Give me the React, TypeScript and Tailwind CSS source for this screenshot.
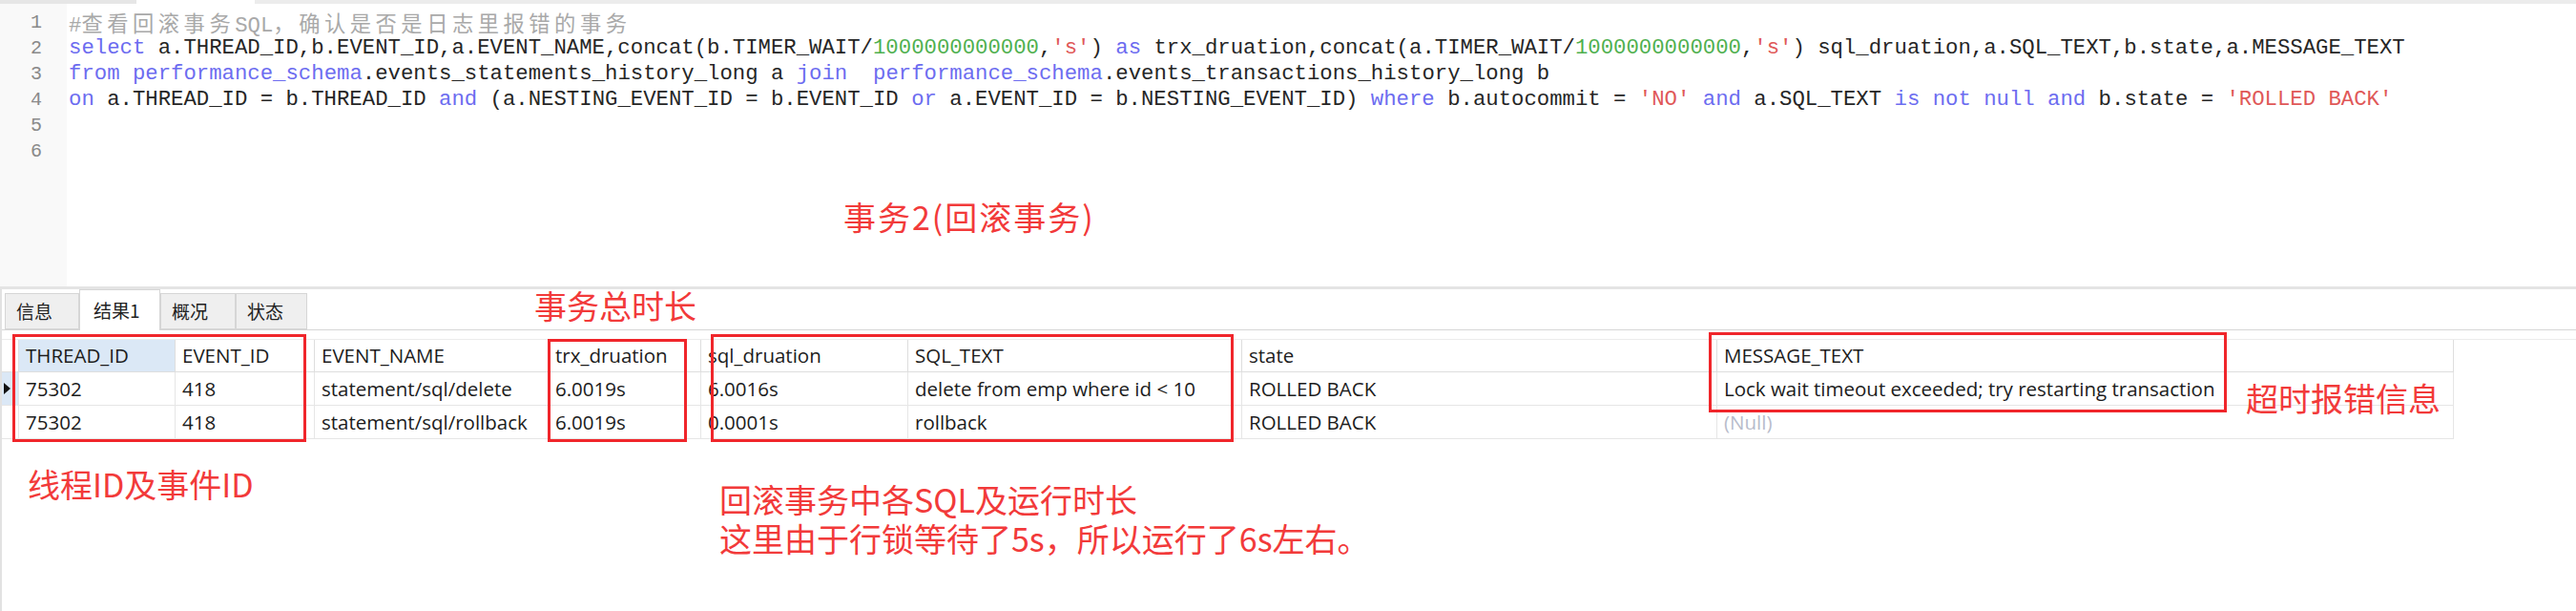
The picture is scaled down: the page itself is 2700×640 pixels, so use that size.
type Seg = [string, "kw" | "id" | "num" | "str" | "cm" | "cjk"];

const segColor: Record<Seg[1], string> = {
  kw: "text-[#6c6cf0]",
  id: "text-[#262626]",
  num: "text-[#4fb04f]",
  str: "text-[#e05858]",
  cm: "text-[#a9a9a9]",
  cjk: "text-[#a9a9a9]",
};

const code: Seg[][] = [
  [
    ["#", "cm"],
    ["查看回滚事务", "cjk"],
    ["SQL", "cm"],
    ["，确认是否是日志里报错的事务", "cjk"],
  ],
  [
    ["select", "kw"],
    [" a.THREAD_ID,b.EVENT_ID,a.EVENT_NAME,concat(b.TIMER_WAIT/", "id"],
    ["1000000000000", "num"],
    [",", "id"],
    ["'s'", "str"],
    [") ", "id"],
    ["as", "kw"],
    [" trx_druation,concat(a.TIMER_WAIT/", "id"],
    ["1000000000000", "num"],
    [",", "id"],
    ["'s'", "str"],
    [") sql_druation,a.SQL_TEXT,b.state,a.MESSAGE_TEXT", "id"],
  ],
  [
    ["from", "kw"],
    [" ", "id"],
    ["performance_schema", "kw"],
    [".events_statements_history_long a ", "id"],
    ["join", "kw"],
    ["  ", "id"],
    ["performance_schema", "kw"],
    [".events_transactions_history_long b", "id"],
  ],
  [
    ["on", "kw"],
    [" a.THREAD_ID = b.THREAD_ID ", "id"],
    ["and", "kw"],
    [" (a.NESTING_EVENT_ID = b.EVENT_ID ", "id"],
    ["or", "kw"],
    [" a.EVENT_ID = b.NESTING_EVENT_ID) ", "id"],
    ["where", "kw"],
    [" b.autocommit = ", "id"],
    ["'NO'", "str"],
    [" ", "id"],
    ["and", "kw"],
    [" a.SQL_TEXT ", "id"],
    ["is not null", "kw"],
    [" ", "id"],
    ["and", "kw"],
    [" b.state = ", "id"],
    ["'ROLLED BACK'", "str"],
  ],
  [],
  [],
];

const cols = [
  { name: "THREAD_ID", w: "w-[164px]" },
  { name: "EVENT_ID", w: "w-[146px]" },
  { name: "EVENT_NAME", w: "w-[245px]" },
  { name: "trx_druation", w: "w-[160px]" },
  { name: "sql_druation", w: "w-[217px]" },
  { name: "SQL_TEXT", w: "w-[350px]" },
  { name: "state", w: "w-[498px]" },
  { name: "MESSAGE_TEXT", w: "w-[772px]" },
];

const rows: (string | null)[][] = [
  ["75302", "418", "statement/sql/delete", "6.0019s", "6.0016s", "delete from emp where id < 10", "ROLLED BACK", "Lock wait timeout exceeded; try restarting transaction"],
  ["75302", "418", "statement/sql/rollback", "6.0019s", "0.0001s", "rollback", "ROLLED BACK", null],
];

const tabs = [
  { label: "信息", w: "w-[78px]" },
  { label: "结果1", w: "w-[85px]", active: true },
  { label: "概况", w: "w-[79px]" },
  { label: "状态", w: "w-[75px]" },
];

const note = "font-['Noto_Sans_CJK_SC',sans-serif] text-[#f23a3a] leading-none whitespace-nowrap absolute";
const box = "absolute border-[3px] border-[#f0262b]";

export default function App() {
  return (
    <div className="relative w-[2700px] h-[640px] overflow-hidden bg-white">
      <div className="flex h-[4px]">
        <div className="w-[143px] bg-[#e6e6e6]" />
        <div className="w-[124px]" />
        <div className="flex-1 bg-[#ececec]" />
      </div>

      {/* editor */}
      <div className="flex h-[296px]">
        <div className="w-[70px] shrink-0 bg-[#f9f9f9] pt-[6px] pr-[26px] text-right font-['Liberation_Mono',monospace] text-[20px] leading-[27px] text-[#8a8a8a]">
          {code.map((_, i) => (
            <div key={i}>{i + 1}</div>
          ))}
        </div>
        <div className="pt-[6px] pl-[2px] font-['Liberation_Mono',monospace] text-[22.3px] leading-[27px] whitespace-pre">
          {code.map((line, i) => (
            <div key={i} className="h-[27px]">
              {line.map(([t, k], j) => (
                <span
                  key={j}
                  className={
                    segColor[k] +
                    (k === "cjk" ? " font-['Noto_Sans_CJK_SC',sans-serif] tracking-[4.5px]" : "")
                  }
                >
                  {t}
                </span>
              ))}
            </div>
          ))}
        </div>
      </div>
      <div className="h-[3px] bg-[#e4e4e4]" />

      {/* result area */}
      <div className="h-[337px] border-l-2 border-[#e2e2e2]">
        <div className="flex h-[43px] items-end border-b border-[#d6d6d6] pl-[3px] font-['Noto_Sans_CJK_SC',sans-serif] text-[19px] text-[#222]">
          {tabs.map((t) =>
            t.active ? (
              <div
                key={t.label}
                className={`${t.w} -mb-px flex h-[43px] items-center border border-b-0 border-[#d6d6d6] bg-white pl-[14px]`}
              >
                {t.label}
              </div>
            ) : (
              <div
                key={t.label}
                className={`${t.w} flex h-[38px] items-center border border-[#d6d6d6] bg-[#efefef] pl-[11px]`}
              >
                {t.label}
              </div>
            )
          )}
        </div>

        <div className="mt-[9px] font-['Open_Sans',sans-serif] text-[20.5px] text-[#1c1c1c]">
          <div className="flex h-[35px] border-t border-[#ececec]">
            <div className="w-[18px] border-r border-b border-[#dedede]" />
            {cols.map((c, i) => (
              <div
                key={c.name}
                className={`${c.w} flex items-center border-r border-b border-[#dedede] px-[7px] ${i === 0 ? "bg-[#dbe8f6]" : ""}`}
              >
                {c.name}
              </div>
            ))}
          </div>
          {rows.map((r, ri) => (
            <div key={ri} className="flex h-[35px]">
              <div
                className={`flex w-[18px] items-center justify-center border-r border-b border-[#e6e6e6] ${ri === 0 ? "bg-[#dbe8f6]" : ""}`}
              >
                {ri === 0 && (
                  <span className="ml-[-6px] block h-0 w-0 border-y-[6px] border-l-[7px] border-y-transparent border-l-[#111]" />
                )}
              </div>
              {r.map((v, ci) => (
                <div
                  key={ci}
                  className={`${cols[ci].w} flex items-center overflow-hidden whitespace-nowrap border-r border-b border-[#e6e6e6] px-[7px]`}
                >
                  {v === null ? <span className="text-[#b8bccb]">(Null)</span> : v}
                </div>
              ))}
            </div>
          ))}
        </div>
      </div>

      {/* annotations */}
      <div className={`${note} left-[884px] top-[210px] text-[34px] tracking-[2px]`}>事务2(回滚事务)</div>
      <div className={`${note} left-[560px] top-[303px] text-[34px]`}>事务总时长</div>
      <div className={`${note} left-[2354px] top-[400px] text-[34px]`}>超时报错信息</div>
      <div className={`${note} left-[29px] top-[490px] text-[34px]`}>线程ID及事件ID</div>
      <div className={`${note} left-[754px] top-[502px] text-[34px] !leading-[41px]`}>
        <div>回滚事务中各SQL及运行时长</div>
        <div>这里由于行锁等待了5s，所以运行了6s左右。</div>
      </div>

      <div className={`${box} left-[13px] top-[350px] h-[113px] w-[308px]`} />
      <div className={`${box} left-[574px] top-[355px] h-[108px] w-[146px]`} />
      <div className={`${box} left-[745px] top-[350px] h-[113px] w-[548px]`} />
      <div className={`${box} left-[1791px] top-[348px] h-[84px] w-[543px]`} />
    </div>
  );
}
